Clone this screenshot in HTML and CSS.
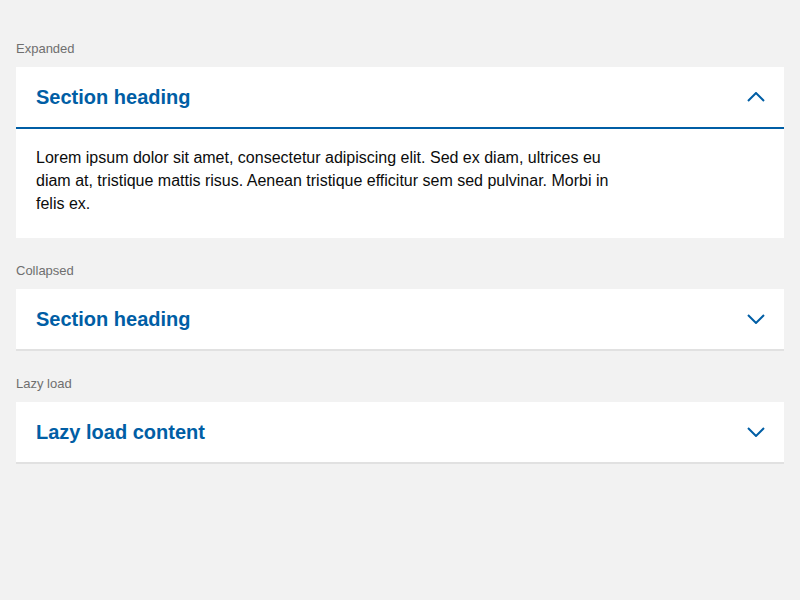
FILE: index.html
```html
<!DOCTYPE html>
<html lang="en">
<head>
<meta charset="utf-8">
<title>Accordion</title>
<link rel="stylesheet" href="styles.css">
</head>
<body>
<main class="page">
  <section class="demo">
    <div class="demo-label">Expanded</div>
    <div class="accordion is-open">
      <div class="accordion-header">
        <h2 class="accordion-title">Section heading</h2>
        <svg class="chevron" width="18" height="10" viewBox="0 0 18 10"><path d="M1 9 L9 1 L17 9" fill="none" stroke="#005ea5" stroke-width="2"/></svg>
      </div>
      <div class="accordion-body">
        <p>Lorem ipsum dolor sit amet, consectetur adipiscing elit. Sed ex diam, ultrices eu diam at, tristique mattis risus. Aenean tristique efficitur sem sed pulvinar. Morbi in felis ex.</p>
      </div>
    </div>
  </section>
  <section class="demo">
    <div class="demo-label">Collapsed</div>
    <div class="accordion">
      <div class="accordion-header">
        <h2 class="accordion-title">Section heading</h2>
        <svg class="chevron" width="18" height="10" viewBox="0 0 18 10"><path d="M1 1 L9 9 L17 1" fill="none" stroke="#005ea5" stroke-width="2"/></svg>
      </div>
    </div>
  </section>
  <section class="demo">
    <div class="demo-label">Lazy load</div>
    <div class="accordion">
      <div class="accordion-header">
        <h2 class="accordion-title">Lazy load content</h2>
        <svg class="chevron" width="18" height="10" viewBox="0 0 18 10"><path d="M1 1 L9 9 L17 1" fill="none" stroke="#005ea5" stroke-width="2"/></svg>
      </div>
    </div>
  </section>
</main>
</body>
</html>
```

FILE: styles.css
```css
html, body {
  margin: 0;
  padding: 0;
  background: #f2f2f2;
  font-family: "Liberation Sans", Arial, sans-serif;
}

.page {
  padding: 40px 16px 0;
  display: flex;
  flex-direction: column;
  gap: 24px;
}

.demo-label {
  font-size: 13px;
  line-height: 18px;
  color: #6f6f6f;
  margin-bottom: 9px;
}

.accordion {
  background: #fff;
  border-bottom: 2px solid #e1e1e1;
}

.accordion.is-open {
  border-bottom: none;
}

.accordion-header {
  display: flex;
  align-items: center;
  justify-content: space-between;
  height: 60px;
  padding: 0 19px 0 20px;
}

.is-open .accordion-header {
  border-bottom: 2px solid #005ea5;
}

.accordion-title {
  margin: 0;
  font-size: 20px;
  line-height: 25px;
  font-weight: bold;
  color: #005ea5;
}

.chevron {
  display: block;
}

.accordion-body {
  padding: 17px 20px 23px;
}

.accordion-body p {
  margin: 0;
  max-width: 600px;
  font-size: 16px;
  line-height: 23px;
  color: #0b0c0c;
}
```
